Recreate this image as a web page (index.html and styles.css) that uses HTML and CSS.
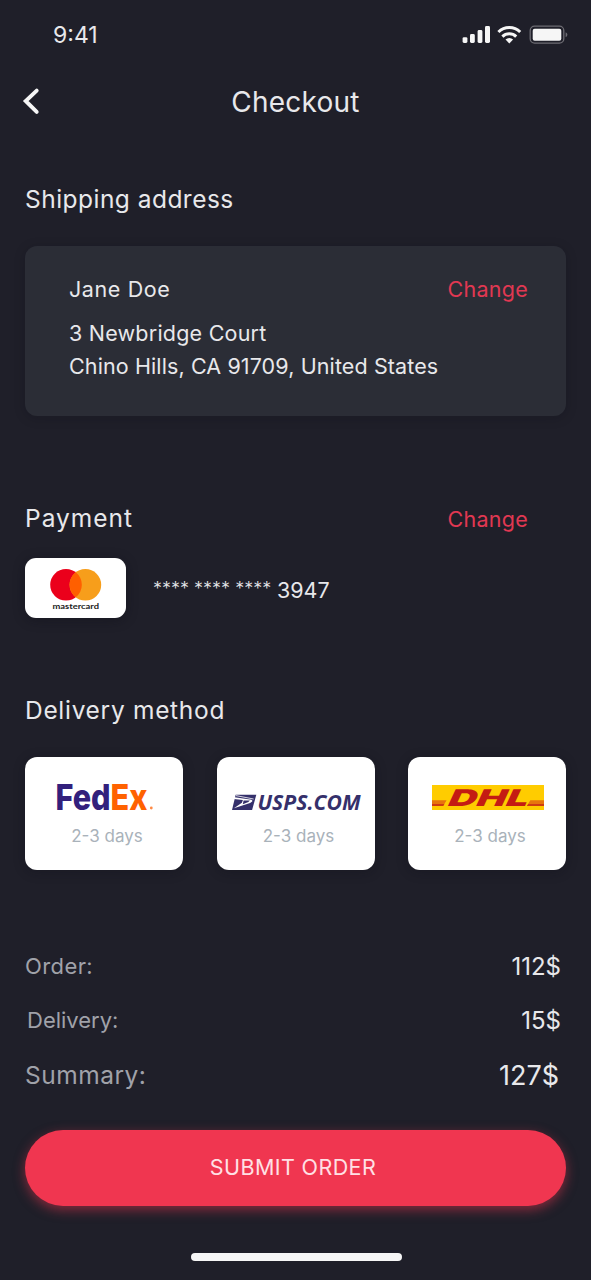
FILE: index.html
```html
<!DOCTYPE html>
<html lang="en">
<head>
<meta charset="utf-8">
<title>Checkout</title>
<link rel="stylesheet" href="styles.css">
</head>
<body>
<div class="screen">
  <div class="status">
    <span class="time">9:41</span>
    <svg class="status-icons" width="107" height="20" viewBox="0 0 107 20">
      <g fill="#f6f6f6">
        <rect x="0.6" y="12.2" width="4.8" height="5.8" rx="1.4"/>
        <rect x="8" y="9" width="4.8" height="9" rx="1.4"/>
        <rect x="15.6" y="5" width="4.8" height="13" rx="1.4"/>
        <rect x="23" y="1" width="5" height="17" rx="1.4"/>
        <path d="M47.3 18.6l3.8-4a5.4 5.4 0 0 0-7.6 0z"/>
      </g>
      <g fill="none" stroke="#f6f6f6" stroke-width="3">
        <path d="M36.4 7a15.6 15.6 0 0 1 21.8 0"/>
        <path d="M40.4 11.6a9.8 9.8 0 0 1 13.8 0"/>
      </g>
      <rect x="68.2" y="1.2" width="33.6" height="17" rx="4.4" fill="none" stroke="#6d6c73" stroke-width="1.3"/>
      <rect x="70.7" y="3.8" width="28.6" height="12" rx="2" fill="#f6f6f6"/>
      <path d="M103.6 7.2q1.8.7 1.8 2.5t-1.8 2.5z" fill="#6d6c73"/>
    </svg>
  </div>
  <header class="topbar">
    <svg class="back" width="20" height="30" viewBox="0 0 20 30"><path d="M15.7 4.6L4.7 15l11 10.9" fill="none" stroke="#f6f6f6" stroke-width="3.9" stroke-linecap="round" stroke-linejoin="miter"/></svg>
    <h1 class="title">Checkout</h1>
  </header>
  <main class="content">
    <h2 class="heading shipping">Shipping address</h2>
    <section class="address">
      <div class="address-top"><span class="name">Jane Doe</span><a class="change">Change</a></div>
      <p class="line street">3 Newbridge Court</p>
      <p class="line city">Chino Hills, CA 91709, United States</p>
    </section>
    <div class="payment-head"><h2 class="heading pay">Payment</h2><a class="change">Change</a></div>
    <div class="payment">
      <div class="card-logo">
        <svg width="101" height="60" viewBox="0 0 101 60">
          <circle cx="41" cy="26.8" r="15.8" fill="#eb001b"/>
          <circle cx="60.4" cy="26.8" r="15.8" fill="#f79e1b"/>
          <path d="M50.7 14.3a15.8 15.8 0 0 1 0 25a15.8 15.8 0 0 1 0-25z" fill="#ff5f00"/>
          <text class="mc-word" x="27.5" y="50.5" textLength="46.5" lengthAdjust="spacingAndGlyphs">mastercard</text>
        </svg>
      </div>
      <span class="stars">**** **** ****</span><span class="digits">3947</span>
    </div>
    <h2 class="heading method">Delivery method</h2>
    <div class="options">
      <div class="option">
        <svg class="brand" width="158" height="64" viewBox="0 0 158 64">
          <text class="fedex" x="30.5" y="52.7" textLength="92" lengthAdjust="spacingAndGlyphs"><tspan class="purple">Fed</tspan><tspan class="orange">Ex</tspan></text>
          <circle cx="126.3" cy="51" r="1.4" fill="#ff8a45"/>
        </svg>
        <span class="days">2-3 days</span>
      </div>
      <div class="option">
        <svg class="brand" width="158" height="64" viewBox="0 0 158 64">
          <path d="M18.7 37.8h20.6l-4.2 15.1H15z" fill="#35306b"/>
          <path d="M17.6 40.2l15.4 2.2q3 .4 2.2 2l-2.1 1.6-16.2 5.2 8-5.5 1-2.6-9-1.1z" fill="#fff"/>
          <path d="M19 38.6l17.6 3.4" stroke="#fff" stroke-width=".8"/>
          <path d="M26.6 43.6h6.2l-1.4 1.5-5.6 2.2z" fill="#35306b"/>
          <text class="usps" x="40.5" y="52.8" textLength="103" lengthAdjust="spacingAndGlyphs">USPS.COM</text>
        </svg>
        <span class="days">2-3 days</span>
      </div>
      <div class="option">
        <svg class="brand" width="158" height="64" viewBox="0 0 158 64">
          <path d="M24 28h112v25H24z" fill="#fc0"/>
          <path d="M24 43.2h14.6l-3.4 5.8H24zM122.3 43.2H136V49h-17.1z" fill="#e8740c"/>
          <path d="M24 47h12.4l-1.2 2H24zM120.2 47H136v2h-17.1z" fill="#cf3a12"/>
          <text class="dhl" transform="translate(38 49) skewX(-25)" x="0" y="0" textLength="80" lengthAdjust="spacingAndGlyphs">DHL</text>
        </svg>
        <span class="days">2-3 days</span>
      </div>
    </div>
    <dl class="totals">
      <div class="row order"><dt>Order:</dt><dd>112$</dd></div>
      <div class="row delivery"><dt>Delivery:</dt><dd>15$</dd></div>
      <div class="row summary"><dt>Summary:</dt><dd>127$</dd></div>
    </dl>
    <button class="submit">SUBMIT ORDER</button>
  </main>
  <div class="home"></div>
</div>
</body>
</html>
```
FILE: styles.css
```css
* { box-sizing: border-box; margin: 0; padding: 0; }
body { background: #1f1f29; font-family: Inter, "Liberation Sans", sans-serif; color: #e8e8eb; font-weight: 400; }
.screen { width: 591px; height: 1280px; display: flex; flex-direction: column; align-items: stretch; overflow: hidden; }
.status { height: 69px; padding: 0 22px 0 53px; display: flex; justify-content: space-between; align-items: center; }
.time { font-size: 23px; }
.status-icons { display: block; }
.topbar { height: 69px; display: grid; grid-template-columns: 100px 1fr 100px; align-items: start; }
.back { margin: 17px 0 0 21px; }
.title { font-size: 28px; line-height: 67px; font-weight: 400; text-align: center; letter-spacing: .25px; }
.content { padding: 0 25px; display: flex; flex-direction: column; }
.heading { font-size: 24.5px; line-height: 36px; font-weight: 400; margin-top: 44px; letter-spacing: .7px; }
.heading.shipping { margin-top: 43px; letter-spacing: .47px; }
.address { height: 170px; margin-top: 29px; padding: 28px 38px 0 44px; border-radius: 12px; background: #2b2d36; box-shadow: 0 2px 12px rgba(12, 12, 22, .2); font-size: 21.5px; }
.address-top { display: flex; justify-content: space-between; line-height: 30px; }
.name { letter-spacing: .6px; }
.change { font-size: 21.5px; color: #e13852; letter-spacing: .25px; }
.line { line-height: 33px; letter-spacing: .22px; }
.city { letter-spacing: .11px; }
.street { margin-top: 13px; }
.payment-head { margin-top: 84px; padding-right: 38px; height: 36px; display: flex; justify-content: space-between; align-items: center; }
.payment-head .change { line-height: 30px; padding-top: 2px; }
.heading.pay { margin: 0; letter-spacing: 1px; }
.payment { display: flex; align-items: center; margin-top: 22px; height: 60px; }
.card-logo { width: 101px; height: 60px; border-radius: 11px; background: #fff; overflow: hidden; box-shadow: 0 2px 12px rgba(12, 12, 22, .4); }
.card-logo svg { display: block; }
.mc-word { font: 700 8px Lato, sans-serif; fill: #222; }
.stars { font-size: 18px; width: 124px; margin-left: 27px; white-space: nowrap; font-weight: 300; }
.digits { font-size: 21.5px; line-height: 30px; padding-top: 4px; }
.heading.method { margin-top: 74px; }
.options { display: flex; justify-content: space-between; margin-top: 29px; }
.option { width: 158px; height: 113px; background: #fff; border-radius: 12px; display: flex; flex-direction: column; align-items: center; box-shadow: 0 2px 12px rgba(12, 12, 22, .3); }
.brand { display: block; }
.days { color: #a9b2ba; font-size: 17px; line-height: 30px; padding-left: 6px; }
.fedex { font: 800 36px Inter, sans-serif; }
.purple { fill: #32207c; }
.orange { fill: #ff6200; }
.usps { font: italic 700 20.5px "Open Sans", sans-serif; fill: #35306b; }
.dhl { font: 900 23px Inter, sans-serif; fill: #c41b13; }
.totals { margin-top: 81px; }
.row { height: 30px; padding-right: 5px; display: flex; justify-content: space-between; align-items: center; font-size: 22px; }
.row dt { color: #a0a2a9; }
.row.order dt { letter-spacing: .4px; }
.row dd { font-size: 24px; }
.row.delivery { margin-top: 24px; padding-left: 2px; }
.row.summary { margin-top: 25px; padding-right: 7px; font-size: 24.5px; }
.row.summary dt { letter-spacing: .5px; }
.row.summary dd { font-size: 27px; }
.submit { height: 76px; margin-top: 40px; padding: 0 5px 2px 0; border: 0; border-radius: 38px; background: #f03650; color: #ffe0e5; font: 400 21.5px Inter, sans-serif; letter-spacing: .4px; box-shadow: 0 4px 12px rgba(240, 54, 80, .5); }
.home { width: 211px; height: 8px; margin: 47px 0 0 191px; border-radius: 4px; background: #f6f6f6; }
```
